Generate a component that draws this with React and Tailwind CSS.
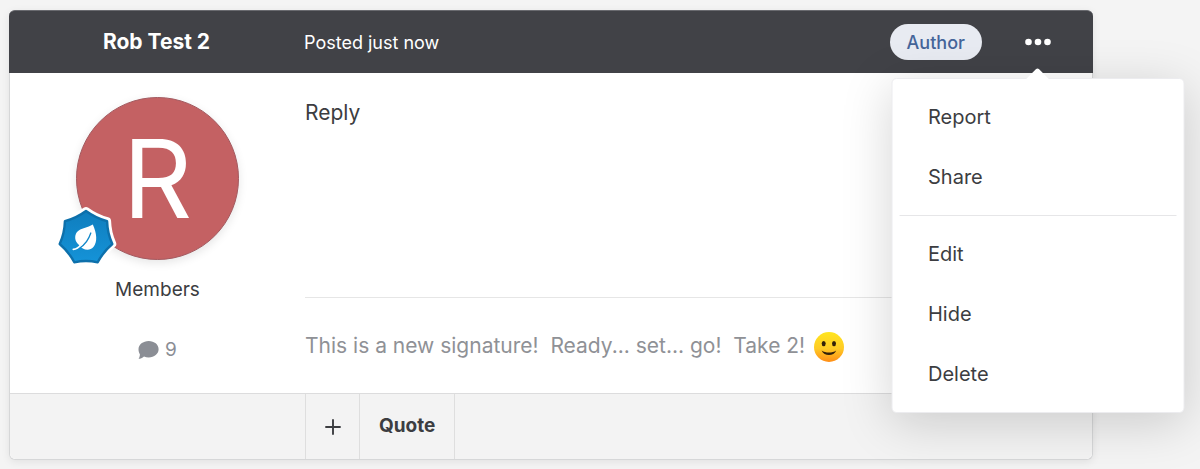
import { useState } from 'react'

const MENU_GROUPS = [
  ['Report', 'Share'],
  ['Edit', 'Hide', 'Delete'],
]

function RankBadge() {
  const star = 'M30 3Q39.5 10 51.1 13.2Q51.4 25 56.3 36Q47.2 43.8 41.7 54.3Q30 51.6 18.3 54.3Q12.8 43.8 3.7 36Q8.6 25 8.9 13.2Q20.5 10 30 3Z'
  return (
    <svg viewBox="0 0 60 60" className="size-full overflow-visible" role="img" aria-label="Rank">
      <defs>
        <linearGradient id="rank" x1="0" y1="0" x2="0" y2="1">
          <stop offset="0" stopColor="#0f7dbd" />
          <stop offset="1" stopColor="#1593d8" />
        </linearGradient>
      </defs>
      <path d={star} fill="#fff" stroke="#fff" strokeWidth="8" strokeLinejoin="round" />
      <path d={star} fill="url(#rank)" stroke="#0d70ab" strokeWidth="2.4" strokeLinejoin="round" />
      <path d="M36.8 16.4C32 19.8 24.5 19.6 21 24C18 28 18.8 33.5 23 37C26.5 42 33.5 43.6 37.4 39C41.8 33.5 40.8 25.5 36.8 16.4Z" fill="#fff" />
      <path d="M34.8 25C32.5 32 29 36.8 23.6 40" fill="none" stroke="#1287c9" strokeWidth="1.3" strokeLinecap="round" />
      <path d="M17.3 41.3C20.5 41.3 23 39.4 25.5 36.3" fill="none" stroke="#fff" strokeWidth="1.7" strokeLinecap="round" />
    </svg>
  )
}

function Smiley() {
  return (
    <svg viewBox="0 0 32 32" className="size-8 shrink-0" role="img" aria-label="Smile">
      <defs>
        <linearGradient id="smile" x1="0" y1="0" x2="0" y2="1">
          <stop offset="0" stopColor="#ffe51f" />
          <stop offset="0.55" stopColor="#ffcb25" />
          <stop offset="1" stopColor="#ff8d16" />
        </linearGradient>
      </defs>
      <circle cx="16" cy="17" r="15" fill="url(#smile)" />
      <ellipse cx="10.7" cy="13.6" rx="2" ry="2.7" fill="#33210a" />
      <ellipse cx="21" cy="13.6" rx="2" ry="2.7" fill="#33210a" />
      <path d="M8.6 20.4C12.5 23.2 19.5 23.2 23.2 20.4C21 26.4 11 26.4 8.6 20.4Z" fill="#33210a" />
    </svg>
  )
}

function PostMenu() {
  return (
    <div className="absolute left-1/2 top-full z-10 -translate-x-1/2 w-[293px] rounded-[5px] bg-white border border-[#ececef] py-2 shadow-[0_10px_50px_rgba(0,0,0,0.17)]">
      <span className="absolute left-1/2 -top-2 size-4 -translate-x-1/2 rotate-45 bg-white rounded-tl-[2px]" />
      {MENU_GROUPS.map((items, i) => (
        <ul key={i} className={i > 0 ? 'mx-[7px] mt-2 pt-2 border-t border-[#e6e6e8]' : 'mx-[7px]'}>
          {items.map(item => (
            <li key={item}>
              <button className="relative block w-full h-[60px] px-[29px] text-left text-[20px] text-[#3c3d41] rounded hover:bg-gray-50">{item}</button>
            </li>
          ))}
        </ul>
      ))}
    </div>
  )
}

export default function App() {
  const [open, setOpen] = useState(true)

  return (
    <div className="min-h-screen bg-[#f4f4f4] pl-[9px] pr-[107px] pt-[10px] pb-[9px] font-[Inter,sans-serif] text-[#3c3d41]">
      <article className="rounded-md border border-t-0 border-[#d6d7d8] bg-white shadow-[0_2px_8px_rgba(0,0,0,0.08)]">
        {/* Header */}
        <header className="-mx-px flex h-[63px] items-center rounded-t-md border-t border-[#696a6f] bg-[#414247] text-white">
          <h3 className="w-[295px] shrink-0 text-center text-[21px] font-bold">Rob Test 2</h3>
          <time className="text-[18px]">Posted just now</time>
          <span className="ml-auto flex h-9 items-center rounded-full bg-[#e8ebf2] px-[17px] text-[18px] font-medium text-[#45659a]">Author</span>
          <div className="relative mx-[30px]">
            <button onClick={() => setOpen(!open)} aria-label="Post options" aria-expanded={open}
              className="flex h-[71px] w-[51px] items-center justify-center">
              <svg width="26" height="8" viewBox="0 0 26 8" fill="currentColor"><circle cx="3.5" cy="4" r="3.3"/><circle cx="13" cy="4" r="3.3"/><circle cx="22.5" cy="4" r="3.3"/></svg>
            </button>
            {open && <PostMenu />}
          </div>
        </header>

        {/* Author and content */}
        <div className="flex h-[320px]">
          <aside className="flex w-[295px] shrink-0 flex-col items-center pt-6">
            <div className="relative">
              <div className="flex size-[163px] items-center justify-center rounded-full border border-[#a35a60] bg-[#c46163] text-[108px] leading-none text-white shadow-[0_3px_10px_rgba(0,0,0,0.1)]">R</div>
              <div className="absolute -left-5 -bottom-2 size-[60px]"><RankBadge /></div>
            </div>
            <div className="mt-4 text-[19px] leading-7">Members</div>
            <div className="mt-8 flex items-center gap-1.5 text-[19px] leading-7 text-[#8b8e95]">
              <svg width="21" height="18" viewBox="0 0 21 18" fill="currentColor"><path d="M10.7 0C16.3 0 20.6 3.6 20.6 8.2C20.6 12.8 16.3 16.4 10.7 16.4C9 16.4 7.4 16.1 6 15.5C4.4 16.9 2.4 17.8 0.5 17.8C1.4 16.8 1.9 15.2 1.9 13.3C1.1 11.9 0.5 10.2 0.5 8.2C0.5 3.6 5.1 0 10.7 0Z"/></svg>
              <span>9</span>
            </div>
          </aside>
          <div className="flex min-w-0 flex-1 flex-col pr-6">
            <p className="pt-6 text-[21px] leading-8">Reply</p>
            <div className="mt-auto flex h-24 items-center gap-2 border-t border-[#e6e6e6] text-[21px] text-[#8f9196]">
              <p className="whitespace-pre">This is a new signature!  Ready... set... go!  Take 2!</p>
              <Smiley />
            </div>
          </div>
        </div>

        {/* Actions */}
        <footer className="flex h-[66px] rounded-b-md border-t border-[#dcdcdd] bg-[#f3f3f3] pl-[295px]">
          <button aria-label="Multi-quote" className="flex w-[54px] items-center justify-center border-l border-[#dedede]">
            <svg width="16" height="16" viewBox="0 0 16 16" fill="none"><path d="M8 1v14M1 8h14" stroke="currentColor" strokeWidth="1.9" strokeLinecap="round"/></svg>
          </button>
          <button className="border-x border-[#dedede] px-[19px] text-[19px] font-bold">Quote</button>
        </footer>
      </article>
    </div>
  )
}
